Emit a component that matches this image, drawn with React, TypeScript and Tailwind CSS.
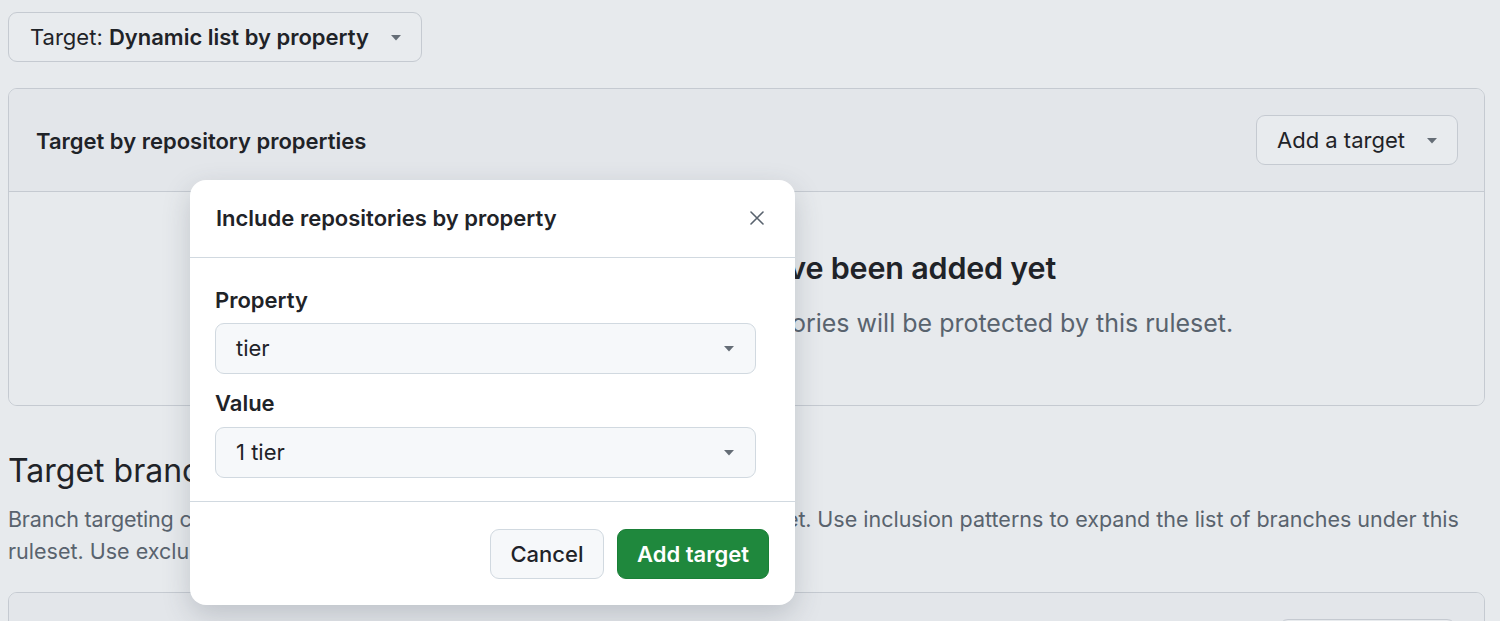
import React from "react"

const Caret = ({ className = "" }: { className?: string }) => (
  <svg width="12" height="7" viewBox="0 0 12 7" className={className}>
    <path d="M1 1h10L6 6.5z" fill="#656d76" />
  </svg>
)

const DropdownButton = ({
  children,
  className = "",
}: {
  children: React.ReactNode
  className?: string
}) => (
  <button
    className={`flex h-[50px] items-center rounded-[9px] border border-[#c5cad1] bg-[#e8ebee] text-[22px] text-[#1f2328] ${className}`}
  >
    {children}
  </button>
)

const Select = ({ value }: { value: string }) => (
  <div className="flex h-[51px] w-full items-center justify-between rounded-[9px] border border-[#d1d9e0] bg-[#f6f8fa] pl-[20px] pr-[20px] text-[22px] text-[#1f2328]">
    <span>{value}</span>
    <Caret />
  </div>
)

const IncludeDialog = () => (
  <div className="absolute left-[190px] top-[180px] w-[605px] overflow-hidden rounded-[16px] bg-white shadow-[0_10px_28px_rgba(60,70,80,0.22)]">
    <div className="flex h-[78px] items-center justify-between border-b border-[#d1d9e0] pl-[26px] pr-[30px]">
      <h2 className="text-[22px] font-semibold text-[#1f2328]">
        Include repositories by property
      </h2>
      <svg width="16" height="16" viewBox="0 0 16 16" className="mb-[2px]">
        <path
          d="M2 2l12 12M14 2L2 14"
          stroke="#59636e"
          strokeWidth="1.6"
          strokeLinecap="round"
        />
      </svg>
    </div>
    <div className="border-b border-[#d1d9e0] pb-[23px] pl-[25px] pr-[39px] pt-[28px]">
      <label className="block text-[22px] font-semibold leading-[28px] text-[#1f2328]">
        Property
      </label>
      <div className="mt-[9px]">
        <Select value="tier" />
      </div>
      <label className="mt-[15px] block text-[22px] font-semibold leading-[28px] text-[#1f2328]">
        Value
      </label>
      <div className="mt-[10px]">
        <Select value="1 tier" />
      </div>
    </div>
    <div className="flex justify-end gap-[13px] pb-[26px] pr-[26px] pt-[27px]">
      <button className="h-[50px] w-[114px] rounded-[9px] border border-[#d1d9e0] bg-[#f6f8fa] text-[22px] font-medium text-[#1f2328]">
        Cancel
      </button>
      <button className="h-[50px] w-[152px] rounded-[9px] border border-[#1a7f37] bg-[#1f883d] text-[22px] font-semibold text-white">
        Add target
      </button>
    </div>
  </div>
)

export default function App() {
  return (
    <div
      className="relative h-[621px] w-full overflow-hidden bg-[#e7eaed] pl-[8px] pr-[15px] pt-[12px]"
      style={{ fontFamily: "Inter, 'Noto Sans', 'Liberation Sans', sans-serif" }}
    >
      <DropdownButton className="w-[414px] pl-[21px] pr-[19px]">
        <span>
          Target: <span className="font-semibold">Dynamic list by property</span>
        </span>
        <Caret className="ml-auto" />
      </DropdownButton>

      <section className="mt-[26px] overflow-hidden rounded-[9px] border border-[#c5cad1]">
        <div className="flex h-[103px] items-center justify-between border-b border-[#c5cad1] bg-[#e3e6ea] pl-[27px] pr-[26px]">
          <h3 className="pt-[3px] text-[22px] font-semibold text-[#1f2328]">
            Target by repository properties
          </h3>
          <DropdownButton className="w-[202px] pl-[20px] pr-[19px]">
            <span>Add a target</span>
            <Caret className="ml-auto" />
          </DropdownButton>
        </div>
        <div className="flex flex-col items-center bg-[#e7eaed] pb-[66px] pt-[58px]">
          <h4 className="text-[30.5px] font-semibold leading-[36px] tracking-[-0.2px] text-[#1f2328]">
            No repository targets have been added yet
          </h4>
          <p className="mt-[21px] text-[25px] leading-[32px] text-[#59636e]">
            Add a property target to define which repositories will be protected by this ruleset.
          </p>
        </div>
      </section>

      <h2 className="mt-[47px] text-[32px] leading-[36px] text-[#1f2328]">Target branches</h2>
      <p className="mt-[14px] text-[21.5px] leading-[32px] text-[#59636e]">
        <span className="tracking-[-0.2px]">
          Branch targeting criteria determine which branches are protected by this ruleset.
        </span>{" "}
        Use inclusion patterns to expand the list of branches under this ruleset. Use exclusion patterns to exclude branches.
      </p>

      <section className="mt-[25px] overflow-hidden rounded-[9px] border border-[#c5cad1]">
        <div className="flex h-[103px] items-start justify-end border-b border-[#c5cad1] bg-[#e3e6ea] pr-[28px] pt-[26px]">
          <DropdownButton className="w-[177px] pl-[20px] pr-[19px]">
            <span>Add target</span>
            <Caret className="ml-auto" />
          </DropdownButton>
        </div>
      </section>

      <IncludeDialog />
    </div>
  )
}
